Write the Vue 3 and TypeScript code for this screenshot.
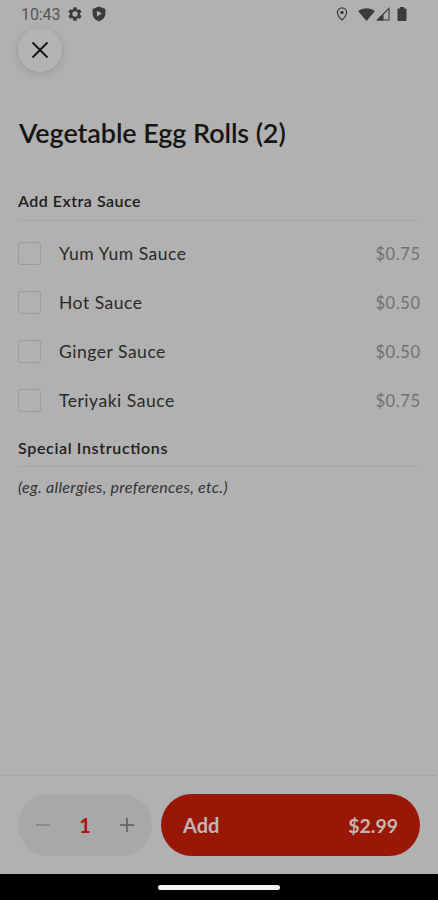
<script setup lang="ts">
import { computed, ref } from 'vue'

interface Sauce {
  name: string
  price: string
}

const sauces = ref<Sauce[]>([
  { name: 'Yum Yum Sauce', price: '$0.75' },
  { name: 'Hot Sauce', price: '$0.50' },
  { name: 'Ginger Sauce', price: '$0.50' },
  { name: 'Teriyaki Sauce', price: '$0.75' },
])

const quantity = ref(1)
const unitPrice = 2.99
const total = computed(() => `$${(unitPrice * quantity.value).toFixed(2)}`)

function decrease(): void {
  if (quantity.value > 1) quantity.value--
}

function increase(): void {
  quantity.value++
}
</script>

<template>
  <div class="screen">
    <header class="status">
      <span class="clock">10:43</span>
      <svg class="gear" viewBox="0 0 24 24" width="16" height="16">
        <path
          fill-rule="evenodd"
          d="M19.4 13a7.500 7.500 0 0 0 0-2l2.100-1.650a.5.5 0 0 0 .12-.64l-2-3.460a.5.5 0 0 0-.61-.22l-2.490 1a7.300 7.300 0 0 0-1.690-.98l-.38-2.650A.49.49 0 0 0 14 2h-4a.49.49 0 0 0-.49.42l-.38 2.650c-.61.25-1.170.58-1.690.98l-2.490-1a.49.49 0 0 0-.61.22l-2 3.460a.49.49 0 0 0 .12.64L4.570 11a7.900 7.900 0 0 0 0 2l-2.110 1.650a.5.5 0 0 0-.12.64l2 3.460c.12.22.39.3.61.22l2.490-1c.52.4 1.080.73 1.690.98l.38 2.650c.03.24.24.4.49.4h4c.25 0 .46-.16.49-.4l.38-2.650a7.300 7.300 0 0 0 1.690-.98l2.490 1c.23.08.49 0 .61-.22l2-3.460a.5.5 0 0 0-.12-.64zM12 16a4 4 0 1 1 0-8 4 4 0 0 1 0 8z"
        />
      </svg>
      <svg class="shield" viewBox="0 0 14 16" width="14" height="16">
        <path fill-rule="evenodd" d="M7 .6 13.400 3v4.600c0 3.500-2.500 6.600-6.400 7.800C3.100 14.200.6 11.100.6 7.600V3zM4.900 4.700v5.800L10 7.600z" />
      </svg>
      <span class="spacer"></span>
      <svg class="pin" viewBox="0 0 12 14" width="12" height="14">
        <path d="M6 .8a4.600 4.600 0 0 0-4.600 4.600C1.400 8.600 6 13 6 13s4.600-4.400 4.600-7.600A4.600 4.600 0 0 0 6 .8z" fill="none" stroke="currentColor" stroke-width="1.200" />
        <circle cx="6" cy="5.400" r="1.700" />
      </svg>
      <svg class="wifi" viewBox="0 0 17 13" width="17" height="13">
        <path d="M.2 3.200C5-.6 12-.6 16.800 3.200L8.500 12.900z" />
      </svg>
      <svg class="signal" viewBox="0 0 14 14" width="14" height="14">
        <path d="M1.400 13 13 1.400V13z" fill="none" stroke="currentColor" stroke-width="1.100" />
        <path d="M.8 13.400 7.500 6.800v6.600z" />
      </svg>
      <svg class="battery" viewBox="0 0 10 14" width="10" height="14">
        <path d="M3 0h4v1.500h1.500q1 0 1 1V13q0 1-1 1h-7q-1 0-1-1V2.500q0-1 1-1H3z" />
      </svg>
    </header>

    <button class="close" aria-label="Close">
      <svg viewBox="0 0 18 18" width="18" height="18">
        <path d="M1.500 1.500 16.500 16.500M16.500 1.500 1.500 16.500" fill="none" stroke="currentColor" stroke-width="1.900" />
      </svg>
    </button>

    <main class="content">
      <h1 class="title">Vegetable Egg Rolls (2)</h1>

      <h2 class="heading">Add Extra Sauce</h2>
      <ul class="sauces">
        <li v-for="sauce in sauces" :key="sauce.name" class="sauce">
          <span class="box"></span>
          <span class="name">{{ sauce.name }}</span>
          <span class="price">{{ sauce.price }}</span>
        </li>
      </ul>

      <h2 class="heading special">Special Instructions</h2>
      <p class="hint">(eg. allergies, preferences, etc.)</p>
    </main>

    <footer class="footer">
      <div class="stepper">
        <button class="step minus" aria-label="Decrease" @click="decrease">
          <svg viewBox="0 0 14 14" width="14" height="14"><path d="M0 7h14" stroke="currentColor" stroke-width="2" /></svg>
        </button>
        <span class="count">{{ quantity }}</span>
        <button class="step plus" aria-label="Increase" @click="increase">
          <svg viewBox="0 0 14 14" width="14" height="14"><path d="M0 7h14M7 0v14" stroke="currentColor" stroke-width="2" /></svg>
        </button>
      </div>
      <button class="add">
        <span>Add</span>
        <span class="total">{{ total }}</span>
      </button>
    </footer>

    <div class="navbar"><span class="handle"></span></div>
  </div>
</template>

<style>
body {
  background: #b1b1b1;
}
</style>

<style scoped>
.screen {
  display: flex;
  flex-direction: column;
  width: 438px;
  height: 900px;
  overflow: hidden;
  background: #b1b1b1;
  color: #151515;
  font-family: Lato, sans-serif;
}

button {
  display: flex;
  align-items: center;
  border: 0;
  padding: 0;
  background: none;
  color: inherit;
  font-family: inherit;
}

svg {
  display: block;
  flex: none;
  fill: currentColor;
}

.status {
  display: flex;
  align-items: center;
  height: 28px;
  padding: 0 31px 0 21px;
  color: #3b3b3b;
}

.clock {
  width: 46px;
  padding-top: 1px;
  font: 16px/27px Roboto, sans-serif;
  letter-spacing: -0.1px;
  color: #555;
}

.shield {
  margin-left: 9px;
}

.spacer {
  flex: 1;
}

.wifi {
  margin-left: 10px;
}

.signal {
  margin-left: 1px;
}

.battery {
  margin-left: 7px;
}

.close {
  justify-content: center;
  flex: none;
  width: 44px;
  height: 44px;
  margin-left: 18px;
  border-radius: 50%;
  background: #b4b4b4;
  box-shadow: 0 2px 10px rgba(0, 0, 0, 0.14);
}

.content {
  flex: 1;
  padding: 43px 18px 0;
}

.title {
  margin: 0;
  padding-left: 1px;
  font-size: 27px;
  line-height: 36px;
  font-weight: 600;
  letter-spacing: -0.1px;
}

.heading {
  margin: 37px 0 0;
  padding-bottom: 6px;
  border-bottom: 1px solid #a5a5a5;
  font-size: 16px;
  line-height: 26px;
  font-weight: 600;
  letter-spacing: 0.5px;
  font-feature-settings: 'liga' 1;
  color: #202020;
}

.sauces {
  margin: 8px 0 0;
  padding: 0;
  list-style: none;
}

.sauce {
  display: flex;
  align-items: center;
  height: 49px;
}

.box {
  box-sizing: border-box;
  width: 23px;
  height: 23px;
  border: 1px solid #9b9b9b;
  border-radius: 3px;
}

.name {
  flex: 1;
  margin-left: 18px;
  font-size: 17.5px;
  line-height: 22px;
  letter-spacing: 0.52px;
  color: #292929;
}

.price {
  margin-right: -0.6px;
  font-size: 16.5px;
  letter-spacing: 0.6px;
  color: #707070;
}

.special {
  margin-top: 10px;
  padding-bottom: 5px;
  letter-spacing: 0.65px;
}

.hint {
  margin: 8px 0 0;
  font-size: 16px;
  line-height: 24px;
  font-style: italic;
  letter-spacing: 0.3px;
  color: #333;
}

.footer {
  box-sizing: border-box;
  display: flex;
  gap: 9px;
  height: 99px;
  padding: 18px 18px 0;
  border-top: 1px solid #a7a7a7;
}

.stepper {
  box-sizing: border-box;
  display: flex;
  align-items: center;
  justify-content: space-between;
  width: 134px;
  height: 62px;
  padding: 0 18px;
  border-radius: 31px;
  background: #a8a8a8;
}

.minus {
  color: #8a8a8a;
}

.plus {
  color: #6c6c6c;
}

.count {
  color: #a81410;
  font-size: 20px;
  font-weight: 700;
}

.add {
  flex: 1;
  justify-content: space-between;
  height: 62px;
  padding: 0 22px;
  border-radius: 31px;
  background: #991705;
  color: #c4b5b2;
  font-size: 20px;
  font-weight: 700;
}

.total {
  font-size: 19.5px;
}

.navbar {
  display: flex;
  justify-content: center;
  align-items: center;
  height: 26px;
  background: #000;
}

.handle {
  width: 122px;
  height: 5px;
  border-radius: 3px;
  background: #f5f5f5;
}
</style>
